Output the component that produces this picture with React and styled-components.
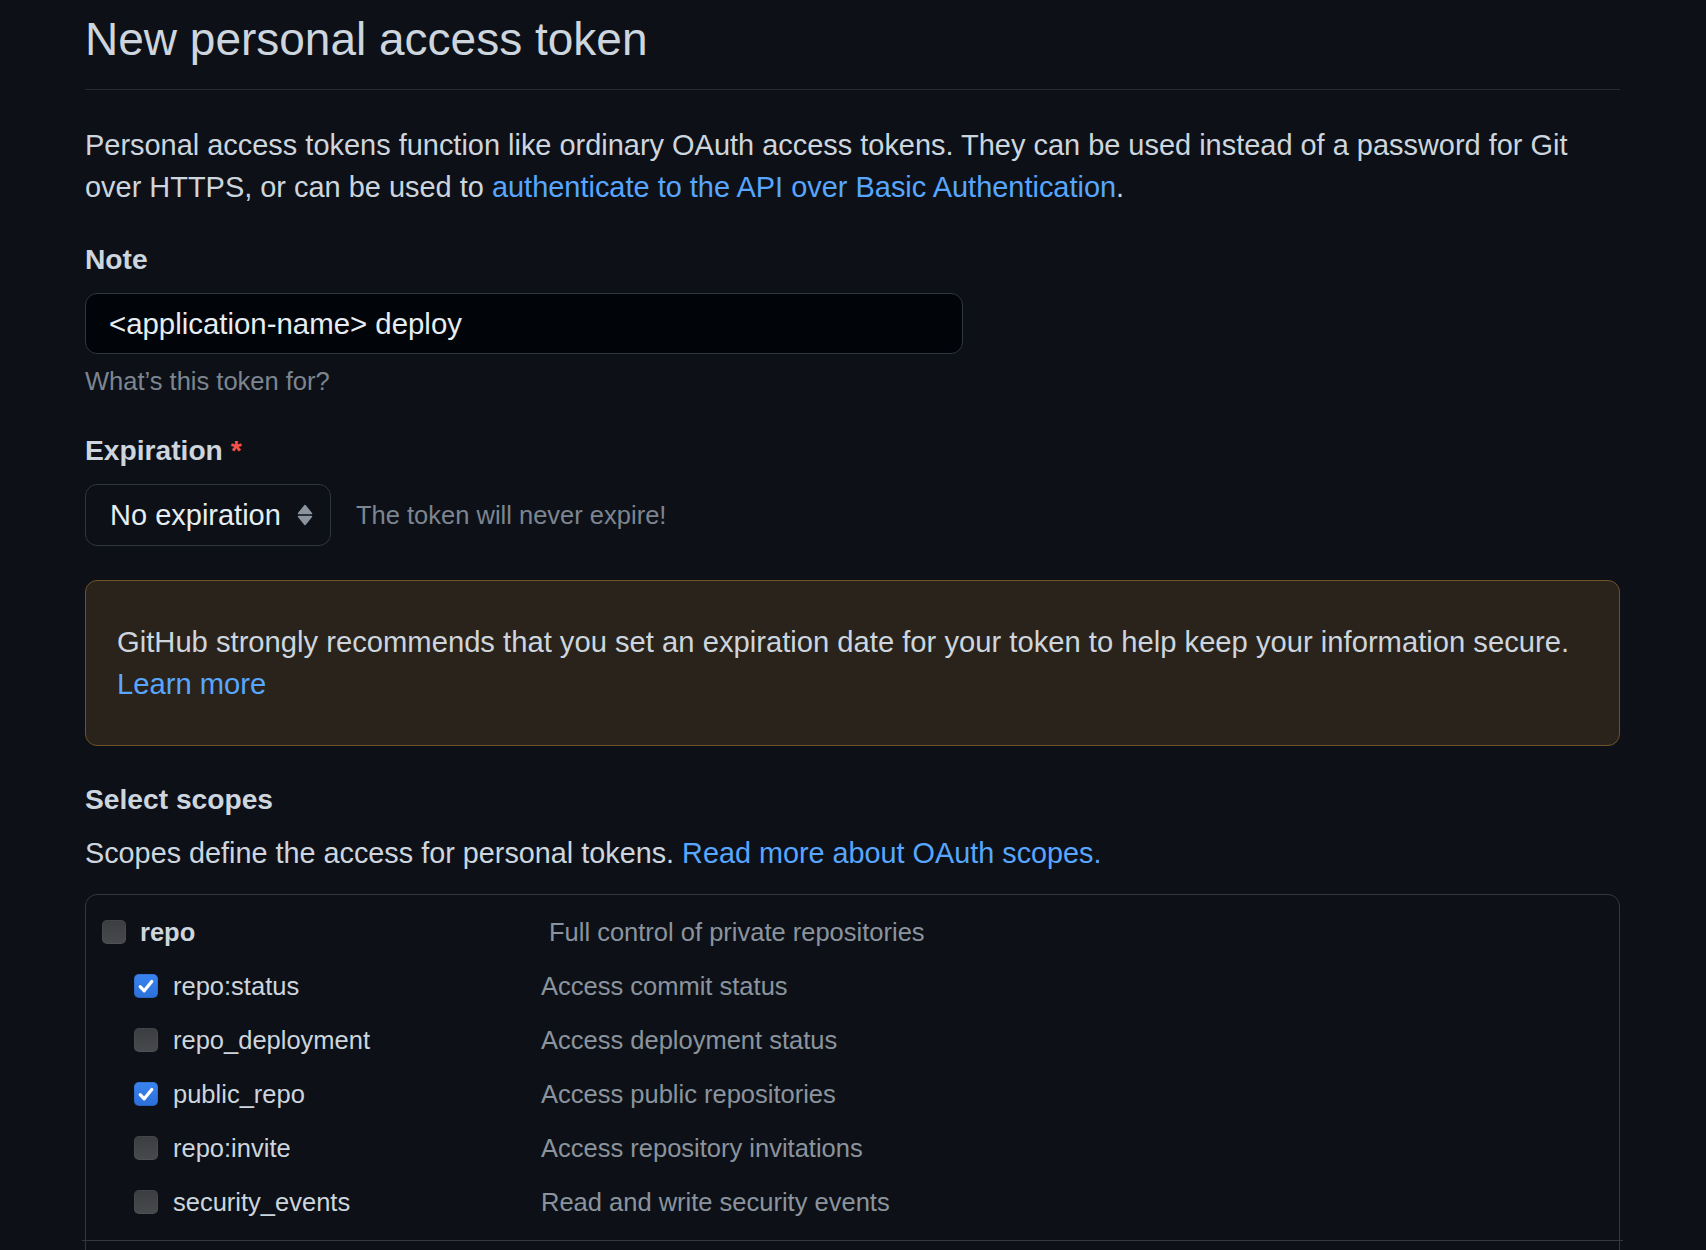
import React from 'react';
import styled, { createGlobalStyle } from 'styled-components';

const GlobalStyle = createGlobalStyle`
    html, body {
        margin: 0;
        padding: 0;
        background: #0d1117;
        overflow: hidden;
    }
    body {
        font-family: "Liberation Sans", Arial, sans-serif;
        color: #cdd5de;
    }
    * {
        box-sizing: border-box;
    }
`;

const scopes = [
    {
        name: 'repo',
        description: 'Full control of private repositories',
        checked: false,
        children: [
            { name: 'repo:status', description: 'Access commit status', checked: true },
            { name: 'repo_deployment', description: 'Access deployment status', checked: false },
            { name: 'public_repo', description: 'Access public repositories', checked: true },
            { name: 'repo:invite', description: 'Access repository invitations', checked: false },
            { name: 'security_events', description: 'Read and write security events', checked: false },
        ],
    },
];

function Checkbox ({ checked }) {
    return (
        <Box $checked={checked}>
            {checked && (
                <svg width="24" height="24" viewBox="0 0 24 24">
                    <path d="M6.2 12.6 L10.2 16.8 L17.8 7.4" fill="none" stroke="#fff" strokeWidth="3.2" strokeLinecap="round" strokeLinejoin="round" />
                </svg>
            )}
        </Box>
    );
}

function SelectArrows () {
    return (
        <svg width="16" height="22" viewBox="0 0 16 22">
            <path d="M8 1.5 L14.5 9.5 H1.5 Z" fill="#8b949e" stroke="#8b949e" strokeWidth="1.5" strokeLinejoin="round" />
            <path d="M8 20.5 L14.5 12.5 H1.5 Z" fill="#8b949e" stroke="#8b949e" strokeWidth="1.5" strokeLinejoin="round" />
        </svg>
    );
}

function ScopeRow ({ scope, child }) {
    return (
        <Row $child={child}>
            <Checkbox checked={scope.checked} />
            <ScopeName $child={child}>{scope.name}</ScopeName>
            <ScopeDescription>{scope.description}</ScopeDescription>
        </Row>
    );
}

function App () {
    return (
        <Page>
            <GlobalStyle />
            <Title>New personal access token</Title>
            <Lead>
                Personal access tokens function like ordinary OAuth access tokens. They can be used instead of a password for Git
                over HTTPS, or can be used to <Link href="#">authenticate to the API over Basic Authentication</Link>.
            </Lead>

            <FormGroup>
                <Label>Note</Label>
                <TextInput defaultValue="<application-name> deploy" />
                <Note>What’s this token for?</Note>
            </FormGroup>

            <FormGroup>
                <Label>
                    Expiration <Required>*</Required>
                </Label>
                <SelectRow>
                    <Select>
                        <span>No expiration</span>
                        <SelectArrows />
                    </Select>
                    <Hint>The token will never expire!</Hint>
                </SelectRow>
            </FormGroup>

            <Flash>
                GitHub strongly recommends that you set an expiration date for your token to help keep your information secure.{' '}
                <Link href="#">Learn more</Link>
            </Flash>

            <SectionTitle>Select scopes</SectionTitle>
            <SectionText>
                Scopes define the access for personal tokens. <Link href="#">Read more about OAuth scopes.</Link>
            </SectionText>

            <ScopeTable>
                {scopes.map(scope => (
                    <ScopeGroup key={scope.name}>
                        <ScopeRow scope={scope} />
                        {scope.children.map(c => (
                            <ScopeRow key={c.name} scope={c} child />
                        ))}
                    </ScopeGroup>
                ))}
            </ScopeTable>
        </Page>
    );
}

const Page = styled.div`
    padding: 10px 86px 0 85px;
`;

const Title = styled.h1`
    margin: 0;
    font-size: 46px;
    font-weight: 400;
    line-height: 58px;
    padding-bottom: 21px;
    border-bottom: 1px solid #262b31;
    color: #cdd5de;
`;

const Lead = styled.p`
    margin: 34px 0 0;
    font-size: 28.95px;
    line-height: 42px;
`;

const Link = styled.a`
    color: #58a6ff;
    text-decoration: none;
`;

const FormGroup = styled.div`
    margin-top: 30px;
`;

const Label = styled.div`
    font-size: 28.2px;
    font-weight: 700;
    line-height: 42px;
`;

const Required = styled.span`
    color: #f85149;
`;

const TextInput = styled.input`
    display: block;
    margin-top: 13px;
    width: 878px;
    height: 61px;
    padding: 0 23px;
    background: #010409;
    border: 1px solid #30363d;
    border-radius: 12px;
    color: #e6edf3;
    font-family: "Liberation Sans", Arial, sans-serif;
    font-size: 29.4px;
    outline: none;
`;

const Note = styled.div`
    margin-top: 9px;
    font-size: 25.5px;
    line-height: 36px;
    color: #7d8590;
`;

const SelectRow = styled.div`
    display: flex;
    align-items: center;
    margin-top: 13px;
`;

const Select = styled.div`
    display: flex;
    align-items: center;
    justify-content: space-between;
    width: 246px;
    height: 62px;
    padding: 0 17px 0 24px;
    border: 1px solid #30363d;
    border-radius: 12px;
    font-size: 29px;
    color: #e6edf3;
`;

const Hint = styled.div`
    margin-left: 25px;
    font-size: 25.5px;
    color: #7d8590;
`;

const Flash = styled.div`
    margin-top: 34px;
    padding: 40px 31px;
    background: #29231b;
    border: 1px solid #6e5324;
    border-radius: 12px;
    font-size: 29.2px;
    line-height: 42px;
`;

const SectionTitle = styled.div`
    margin-top: 32px;
    font-size: 28.2px;
    font-weight: 700;
    line-height: 42px;
`;

const SectionText = styled.div`
    margin-top: 12px;
    font-size: 28.8px;
    line-height: 42px;
`;

const ScopeTable = styled.div`
    margin-top: 20px;
    padding-bottom: 40px;
    border: 1px solid #33383f;
    border-radius: 12px;
`;

const ScopeGroup = styled.div`
    margin: 0 -4px;
    padding: 10px 4px 11px;
    border-bottom: 1px solid #33383f;
`;

const Row = styled.div`
    display: flex;
    align-items: center;
    height: 54px;
    padding-left: ${p => (p.$child ? '48px' : '16px')};
`;

const Box = styled.span`
    flex: none;
    display: flex;
    width: 24px;
    height: 24px;
    border-radius: 5px;
    background: ${p => (p.$checked
        ? 'linear-gradient(180deg, #3a84f0 0%, #2c6fd9 100%)'
        : 'linear-gradient(180deg, #3c3d41 0%, #48494d 100%)')};
    box-shadow: inset 0 0 0 1px ${p => (p.$checked ? 'rgba(0,0,0,0.1)' : 'rgba(255,255,255,0.04)')};
`;

const ScopeName = styled.span`
    flex: none;
    width: ${p => (p.$child ? '368px' : '409px')};
    margin-left: ${p => (p.$child ? '15px' : '14px')};
    font-size: 25.5px;
    font-weight: ${p => (p.$child ? 400 : 700)};
    color: #cdd5de;
`;

const ScopeDescription = styled.span`
    font-size: 25.5px;
    color: #8b949e;
`;

export default App;
